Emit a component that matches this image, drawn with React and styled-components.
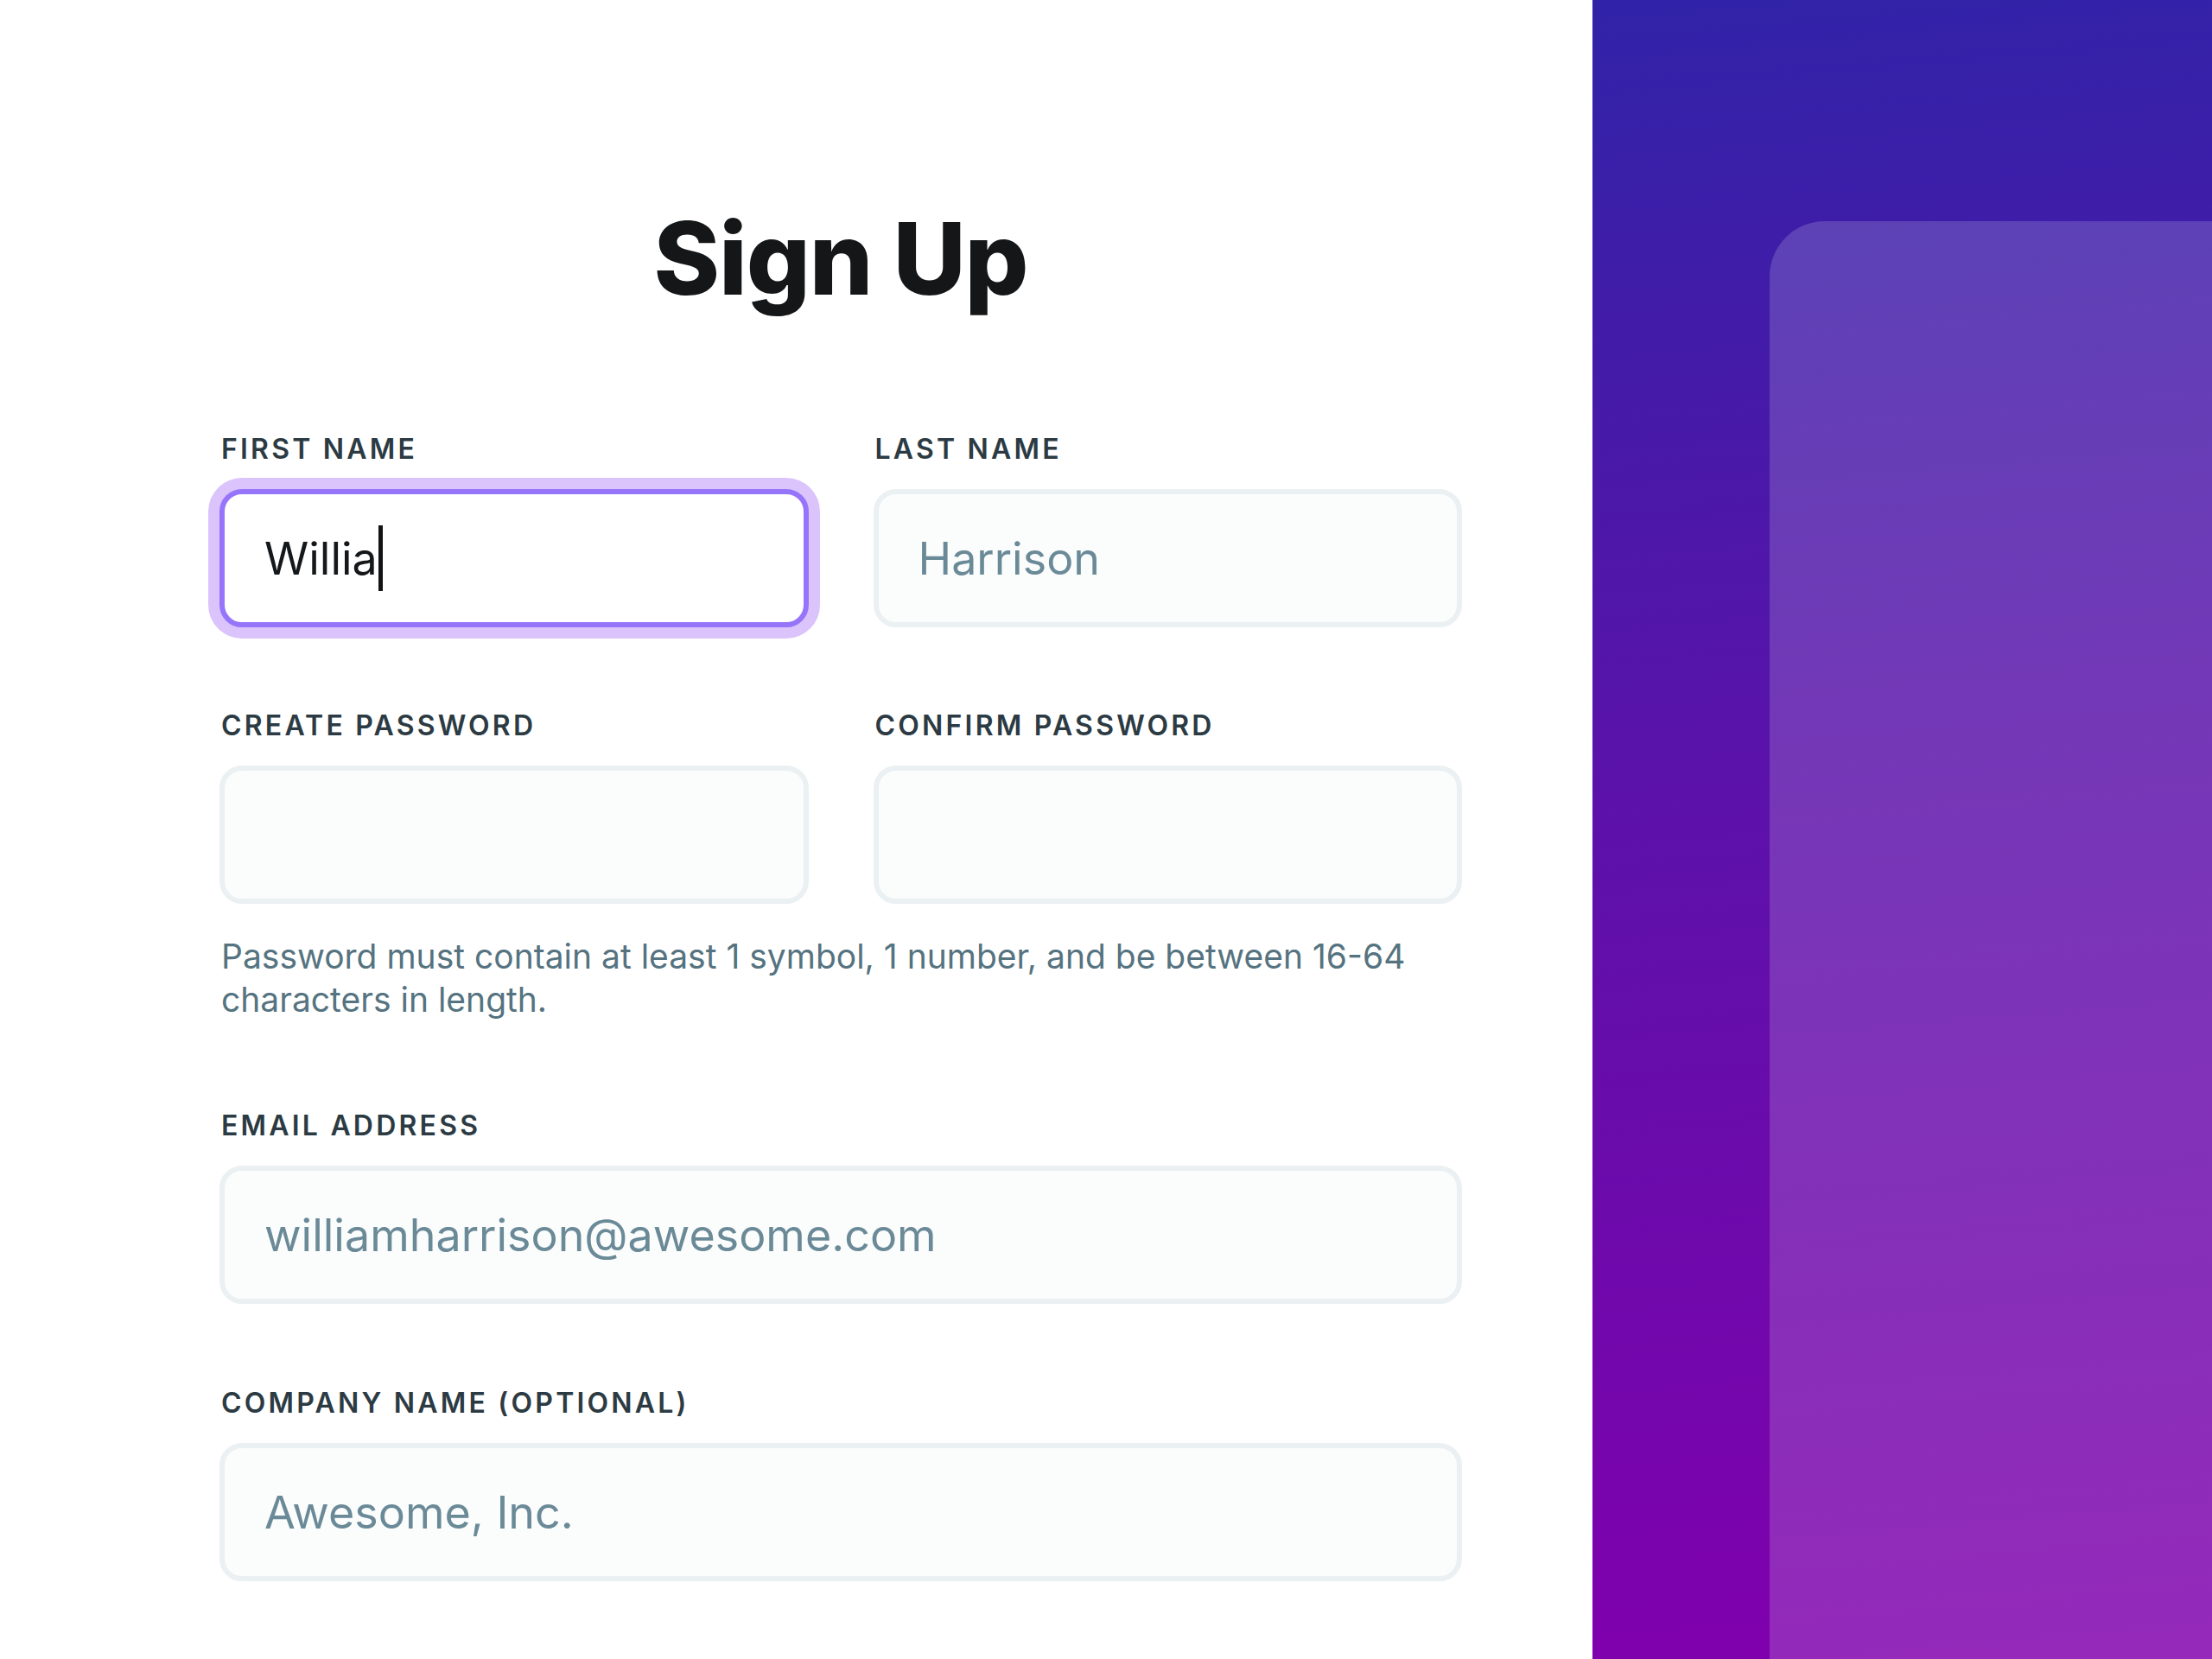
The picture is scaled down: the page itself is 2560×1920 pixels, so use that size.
import styled, { createGlobalStyle } from "styled-components";

const GlobalStyle = createGlobalStyle`
  html, body {
    margin: 0;
    padding: 0;
    background: #ffffff;
  }
  * {
    box-sizing: border-box;
  }
`;

const fields = [
  [
    { label: "First name", value: "Willia", focused: true },
    { label: "Last name", placeholder: "Harrison" },
  ],
  [
    { label: "Create password", placeholder: "" },
    { label: "Confirm password", placeholder: "" },
  ],
];

//가입 폼 화면
function App() {
  return (
    <>
      <GlobalStyle />
      <Page>
        <FormSide>
          <Form>
            <Title>Sign Up</Title>

            <Row>
              {fields[0].map((f) => (
                <FormField key={f.label} {...f} />
              ))}
            </Row>

            <Row $top="94px">
              {fields[1].map((f) => (
                <FormField key={f.label} {...f} />
              ))}
            </Row>
            <HelpText>
              Password must contain at least 1 symbol, 1 number, and be between
              16-64 characters in length.
            </HelpText>

            <Section $top="101px">
              <FormField
                label="Email address"
                placeholder="williamharrison@awesome.com"
              />
            </Section>
            <Section $top="95px">
              <FormField
                label="Company name (optional)"
                placeholder="Awesome, Inc."
              />
            </Section>
          </Form>
        </FormSide>

        <ArtSide>
          <GlassCard />
        </ArtSide>
      </Page>
    </>
  );
}

function FormField({ label, value, placeholder, focused }) {
  return (
    <Field>
      <Label>{label}</Label>
      <InputBox $focused={focused}>
        {value ? (
          <>
            <Value>{value}</Value>
            {focused && <Caret />}
          </>
        ) : (
          <Placeholder>{placeholder}</Placeholder>
        )}
      </InputBox>
    </Field>
  );
}

const Page = styled.div`
  width: 2560px;
  height: 1920px;
  display: grid;
  grid-template-columns: 1843px 1fr;
  overflow: hidden;
  font-family: Inter, "Noto Sans", "Liberation Sans", sans-serif;
`;

const FormSide = styled.div`
  background: #ffffff;
  padding: 230px 151px 0 254px;
`;

const Form = styled.div`
  display: flex;
  flex-direction: column;
`;

const Title = styled.h1`
  margin: 0 0 131px;
  font-size: 116px;
  line-height: 139px;
  font-weight: 800;
  letter-spacing: -0.01em;
  color: #141618;
  text-align: center;
`;

const Row = styled.div`
  margin-top: ${(props) => props.$top || "0"};
  display: grid;
  grid-template-columns: 1fr 1fr;
  column-gap: 75px;
`;

const Section = styled.div`
  margin-top: ${(props) => props.$top || "0"};
`;

const Field = styled.div`
  display: flex;
  flex-direction: column;
  gap: 26px;
`;

const Label = styled.div`
  padding-left: 2px;
  font-size: 32px;
  line-height: 40px;
  font-weight: 600;
  letter-spacing: 0.1em;
  text-transform: uppercase;
  color: #2c3b43;
`;

const InputBox = styled.div`
  height: 160px;
  display: flex;
  align-items: center;
  padding: 0 46px;
  border-radius: 26px;
  border: 6px solid ${(props) => (props.$focused ? "#9675fb" : "#ebf0f2")};
  background: ${(props) => (props.$focused ? "#ffffff" : "#fbfcfc")};
  box-shadow: ${(props) =>
    props.$focused ? "0 0 0 13px #dac4fb" : "none"};
  font-size: 52px;
`;

const Value = styled.span`
  color: #15181a;
`;

const Placeholder = styled.span`
  color: #6b8a98;
`;

const Caret = styled.span`
  display: inline-block;
  width: 5px;
  height: 76px;
  margin-left: 1px;
  background: #111314;
`;

const HelpText = styled.p`
  margin: 36px 0 0;
  padding-left: 2px;
  font-size: 39px;
  line-height: 50px;
  color: #557380;
`;

const ArtSide = styled.div`
  display: flex;
  padding: 256px 0 0 205px;
  background: linear-gradient(175deg, #3023a8 0%, #5a12aa 45%, #8100ad 100%);
`;

const GlassCard = styled.div`
  flex: 1;
  border-top-left-radius: 64px;
  background: rgba(255, 255, 255, 0.16);
`;

export default App;
